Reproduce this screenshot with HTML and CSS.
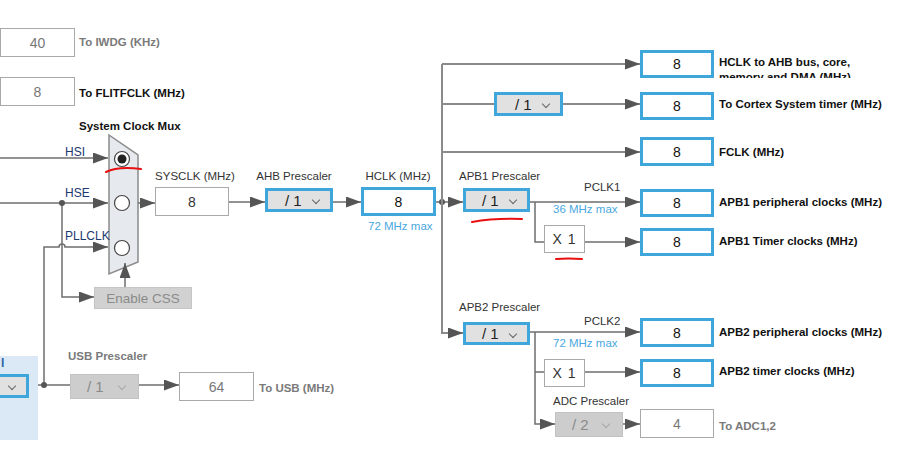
FILE: index.html
```html
<!DOCTYPE html>
<html>
<head>
<meta charset="utf-8">
<link rel="stylesheet" href="styles.css">
</head>
<body>
<div class="canvas">
  <svg class="wires" width="901" height="461" viewBox="0 0 901 461">
    <defs>
      <marker id="ar" markerWidth="15" markerHeight="11" refX="15" refY="5.5" orient="auto" markerUnits="userSpaceOnUse">
        <path d="M0 0 L15 5.5 L0 11 Z" fill="#555"/>
      </marker>
    </defs>
    <!-- left inputs -->
    <path class="w" d="M0 158 H108" marker-end="url(#ar)"/>
    <path class="w" d="M0 203 H108" marker-end="url(#ar)"/>
    <path class="w" d="M62 203 V297 H94" marker-end="url(#ar)"/>
    <path class="w" d="M44 385 V247 H59 A3 3 0 0 1 65 247 H108" marker-end="url(#ar)"/>
    <circle class="dot" cx="62" cy="203" r="3"/>
    <!-- mux -->
    <polygon class="mux" points="109,135 138,155 138,262 109,274"/>
    <circle class="radio" cx="122" cy="159" r="7.5"/>
    <circle class="radio-dot" cx="122" cy="159" r="4.5"/>
    <circle class="radio" cx="122" cy="203" r="7.5"/>
    <circle class="radio" cx="122" cy="248" r="7.5"/>
    <path class="w" d="M125 287 V263" marker-end="url(#ar)"/>
    <path class="w" d="M138 203 H155" marker-end="url(#ar)"/>
    <path class="w" d="M229 202 H265" marker-end="url(#ar)"/>
    <path class="w" d="M333 202 H361" marker-end="url(#ar)"/>
    <path class="w" d="M436 202 H463" marker-end="url(#ar)"/>
    <circle class="dot" cx="442" cy="202" r="3"/>
    <!-- HCLK bus -->
    <path class="bus" d="M442 64 V333 H463" marker-end="url(#ar)"/>
    <path class="bus" d="M442 64 H640" marker-end="url(#ar)"/>
    <path class="bus" d="M442 104 H494"/>
    <path class="bus" d="M563 104 H640" marker-end="url(#ar)"/>
    <path class="bus" d="M442 152 H640" marker-end="url(#ar)"/>
    <!-- APB1 -->
    <path class="w" d="M530 202 H640" marker-end="url(#ar)"/>
    <path class="w2" d="M535 202 V242 H544"/>
    <path class="w" d="M585 242 H640" marker-end="url(#ar)"/>
    <!-- APB2 -->
    <path class="w" d="M530 332 H640" marker-end="url(#ar)"/>
    <path class="w2" d="M535 332 V424 H555" marker-end="url(#ar)"/>
    <path class="w2" d="M535 372 H544"/>
    <path class="w" d="M585 372 H640" marker-end="url(#ar)"/>
    <path class="w" d="M623 424 H640" marker-end="url(#ar)"/>
    <!-- USB -->
    <path class="w" d="M29 385 H70"/>
    <circle class="dot" cx="44" cy="385" r="3"/>
    <path class="w" d="M139 385 H179" marker-end="url(#ar)"/>
    <!-- red marks -->
    <path class="red" d="M106 172 Q118 166 141 169"/>
    <path class="red" d="M472 222 Q495 218 522 219"/>
    <path class="red" d="M556 259 Q568 258 582 259"/>
  </svg>

  <div class="panel"><span class="panel-label">l</span></div>
  <div class="sel sel-panel"><span class="chev"></span></div>

  <div class="box gray n-iwdg">40</div>
  <div class="lbl lbl-dim n-iwdg-l">To IWDG (KHz)</div>
  <div class="box gray n-flit">8</div>
  <div class="lbl lbl-b n-flit-l">To FLITFCLK (MHz)</div>

  <div class="lbl lbl-b n-mux-l">System Clock Mux</div>
  <div class="sig n-hsi">HSI</div>
  <div class="sig n-hse">HSE</div>
  <div class="sig n-pll">PLLCLK</div>
  <div class="css">Enable CSS</div>

  <div class="cap n-sys-l">SYSCLK (MHz)</div>
  <div class="box gray dark n-sys">8</div>

  <div class="cap n-ahb-l">AHB Prescaler</div>
  <div class="sel n-ahb">/ 1<span class="chev"></span></div>

  <div class="cap n-hclk-l">HCLK (MHz)</div>
  <div class="box blue n-hclk">8</div>
  <div class="max n-hclk-m">72 MHz max</div>

  <div class="box blue n-o1">8</div>
  <div class="lbl lbl-b clip n-o1-l">HCLK to AHB bus, core,<br>memory and DMA (MHz)</div>
  <div class="sel n-cdiv">/ 1<span class="chev"></span></div>
  <div class="box blue n-o2">8</div>
  <div class="lbl lbl-b n-o2-l">To Cortex System timer (MHz)</div>
  <div class="box blue n-o3">8</div>
  <div class="lbl lbl-b n-o3-l">FCLK (MHz)</div>

  <div class="cap-l n-apb1-l">APB1 Prescaler</div>
  <div class="sel n-apb1">/ 1<span class="chev"></span></div>
  <div class="cap-l n-pclk1">PCLK1</div>
  <div class="max n-pclk1-m">36 MHz max</div>
  <div class="box blue n-o4">8</div>
  <div class="lbl lbl-b n-o4-l">APB1 peripheral clocks (MHz)</div>
  <div class="box gray dark mul n-x1a">X 1</div>
  <div class="box blue n-o5">8</div>
  <div class="lbl lbl-b n-o5-l">APB1 Timer clocks (MHz)</div>

  <div class="cap-l n-apb2-l">APB2 Prescaler</div>
  <div class="sel n-apb2">/ 1<span class="chev"></span></div>
  <div class="cap-l n-pclk2">PCLK2</div>
  <div class="max n-pclk2-m">72 MHz max</div>
  <div class="box blue n-o6">8</div>
  <div class="lbl lbl-b n-o6-l">APB2 peripheral clocks (MHz)</div>
  <div class="box gray dark mul n-x1b">X 1</div>
  <div class="box blue n-o7">8</div>
  <div class="lbl lbl-b n-o7-l">APB2 timer clocks (MHz)</div>

  <div class="cap-l n-adc-l">ADC Prescaler</div>
  <div class="sel off n-adc">/ 2<span class="chev"></span></div>
  <div class="box gray n-adcv">4</div>
  <div class="lbl lbl-dim n-adc-o">To ADC1,2</div>

  <div class="lbl lbl-dim n-usb-l">USB Prescaler</div>
  <div class="sel off n-usb">/ 1<span class="chev"></span></div>
  <div class="box gray n-usbv">64</div>
  <div class="lbl lbl-dim n-usb-o">To USB (MHz)</div>
</div>
</body>
</html>
```

FILE: styles.css
```css
html, body {
  margin: 0;
  padding: 0;
  background: #fff;
  overflow: hidden;
}
.canvas {
  position: relative;
  width: 901px;
  height: 461px;
  overflow: hidden;
  font-family: "Liberation Sans", Arial, sans-serif;
  color: #333;
}
.wires {
  position: absolute;
  left: 0;
  top: 0;
}
.w, .w2 {
  fill: none;
  stroke: #6e6e6e;
  stroke-width: 1.5;
}
.bus {
  fill: none;
  stroke: #8a8a8a;
  stroke-width: 2;
}
.dot { fill: #555; }
.mux { fill: #e6eaee; stroke: #8a8a8a; stroke-width: 1.5; }
.radio { fill: #fff; stroke: #444; stroke-width: 1.2; }
.radio-dot { fill: #222; }
.red { fill: none; stroke: #e81010; stroke-width: 2; stroke-linecap: round; }

.panel {
  position: absolute;
  left: 0;
  top: 356px;
  width: 38px;
  height: 84px;
  background: #dbe8f5;
}
.panel-label {
  position: absolute;
  left: 1px;
  top: 0;
  font-size: 12px;
  font-weight: bold;
  color: #2a64a8;
}

.box {
  position: absolute;
  box-sizing: border-box;
  width: 74px;
  height: 29px;
  background: #fff;
  display: flex;
  align-items: center;
  justify-content: center;
  font-size: 14px;
}
.box.gray {
  border: 1px solid #a9a9a9;
  color: #777;
}
.box.gray.dark { color: #333; }
.box.blue {
  border: 3px solid #3ea6da;
  color: #111;
}
.box.mul {
  width: 41px;
  height: 28px;
  font-size: 14px;
  letter-spacing: 1px;
}

.sel {
  position: absolute;
  box-sizing: border-box;
  width: 68px;
  height: 24px;
  background: #e1e1e1;
  border: 3px solid #3ea6da;
  padding-left: 14px;
  display: flex;
  align-items: center;
  font-size: 15px;
  color: #222;
}
.sel.off {
  background: #cdcdcd;
  border: 1px solid #c2c2c2;
  padding-left: 16px;
  color: #8a8a8a;
}
.chev {
  position: absolute;
  right: 11px;
  top: 6px;
  width: 5px;
  height: 5px;
  border-right: 1px solid #666;
  border-bottom: 1px solid #666;
  transform: rotate(45deg);
}
.sel.off .chev { border-color: #a8a8a8; right: 13px; top: 8px; }

.lbl {
  position: absolute;
  font-size: 11.5px;
  line-height: 14px;
  white-space: nowrap;
}
.lbl-b { font-weight: bold; color: #111; }
.lbl-dim { font-weight: bold; color: #7a7a7a; }
.clip {
  height: 28px;
  overflow: hidden;
  line-height: 15px;
  padding-top: 5px;
  box-sizing: border-box;
}
.cap, .cap-l {
  position: absolute;
  font-size: 11.5px;
  line-height: 14px;
  white-space: nowrap;
  color: #333;
}
.cap {
  width: 100px;
  text-align: center;
}
.max {
  position: absolute;
  font-size: 11.5px;
  line-height: 14px;
  color: #4aa8e0;
  white-space: nowrap;
}
.sig {
  position: absolute;
  font-size: 12px;
  line-height: 14px;
  color: #1c3a70;
}
.css {
  position: absolute;
  left: 94px;
  top: 287px;
  width: 98px;
  height: 22px;
  box-sizing: border-box;
  background: #d1d1d1;
  border: 1px solid #c6c6c6;
  color: #8a8a8a;
  font-size: 13.5px;
  display: flex;
  align-items: center;
  justify-content: center;
}

/* diagram node placement */
.n-iwdg { left: 0; top: 28px; width: 75px; }
.n-iwdg-l { left: 79px; top: 35px; }
.n-flit { left: 0; top: 77px; width: 75px; }
.n-flit-l { left: 79px; top: 86px; }
.n-mux-l { left: 79px; top: 119px; }
.n-hsi { left: 65px; top: 145px; }
.n-hse { left: 65px; top: 186px; }
.n-pll { left: 65px; top: 229px; }

.n-sys-l { left: 145px; top: 169px; }
.n-sys { left: 155px; top: 187px; }
.n-ahb-l { left: 244px; top: 169px; }
.n-ahb { left: 265px; top: 188px; padding-left: 17px; }
.n-hclk-l { left: 348px; top: 169px; }
.n-hclk { left: 361px; top: 187px; width: 75px; }
.n-hclk-m { left: 368px; top: 219px; }

.n-o1 { left: 640px; top: 50px; height: 28px; }
.n-o1-l { left: 719px; top: 50px; }
.n-cdiv { left: 494px; top: 92px; width: 69px; padding-left: 18px; }
.n-o2 { left: 640px; top: 92px; height: 28px; }
.n-o2-l { left: 719px; top: 97px; }
.n-o3 { left: 640px; top: 137px; }
.n-o3-l { left: 719px; top: 145px; }

.n-apb1-l { left: 459px; top: 169px; }
.n-apb1 { left: 463px; top: 188px; width: 67px; padding-left: 16px; }
.n-pclk1 { left: 584px; top: 180px; }
.n-pclk1-m { left: 553px; top: 202px; }
.n-o4 { left: 640px; top: 189px; height: 28px; }
.n-o4-l { left: 719px; top: 195px; }
.n-x1a { left: 544px; top: 225px; }
.n-o5 { left: 640px; top: 228px; height: 28px; }
.n-o5-l { left: 719px; top: 234px; }

.n-apb2-l { left: 459px; top: 300px; }
.n-apb2 { left: 463px; top: 322px; width: 67px; height: 23px; padding-left: 16px; }
.n-pclk2 { left: 584px; top: 314px; }
.n-pclk2-m { left: 553px; top: 336px; }
.n-o6 { left: 640px; top: 318px; }
.n-o6-l { left: 719px; top: 325px; }
.n-x1b { left: 544px; top: 359px; }
.n-o7 { left: 640px; top: 359px; height: 28px; }
.n-o7-l { left: 719px; top: 364px; }

.n-adc-l { left: 553px; top: 394px; }
.n-adc { left: 555px; top: 412px; height: 25px; }
.n-adcv { left: 640px; top: 409px; }
.n-adc-o { left: 719px; top: 419px; }

.sel-panel { left: -40px; top: 374px; width: 69px; height: 24px; }
.n-usb-l { left: 68px; top: 349px; }
.n-usb { left: 70px; top: 374px; width: 69px; height: 25px; }
.n-usbv { left: 179px; top: 372px; width: 75px; }
.n-usb-o { left: 259px; top: 381px; }
```
